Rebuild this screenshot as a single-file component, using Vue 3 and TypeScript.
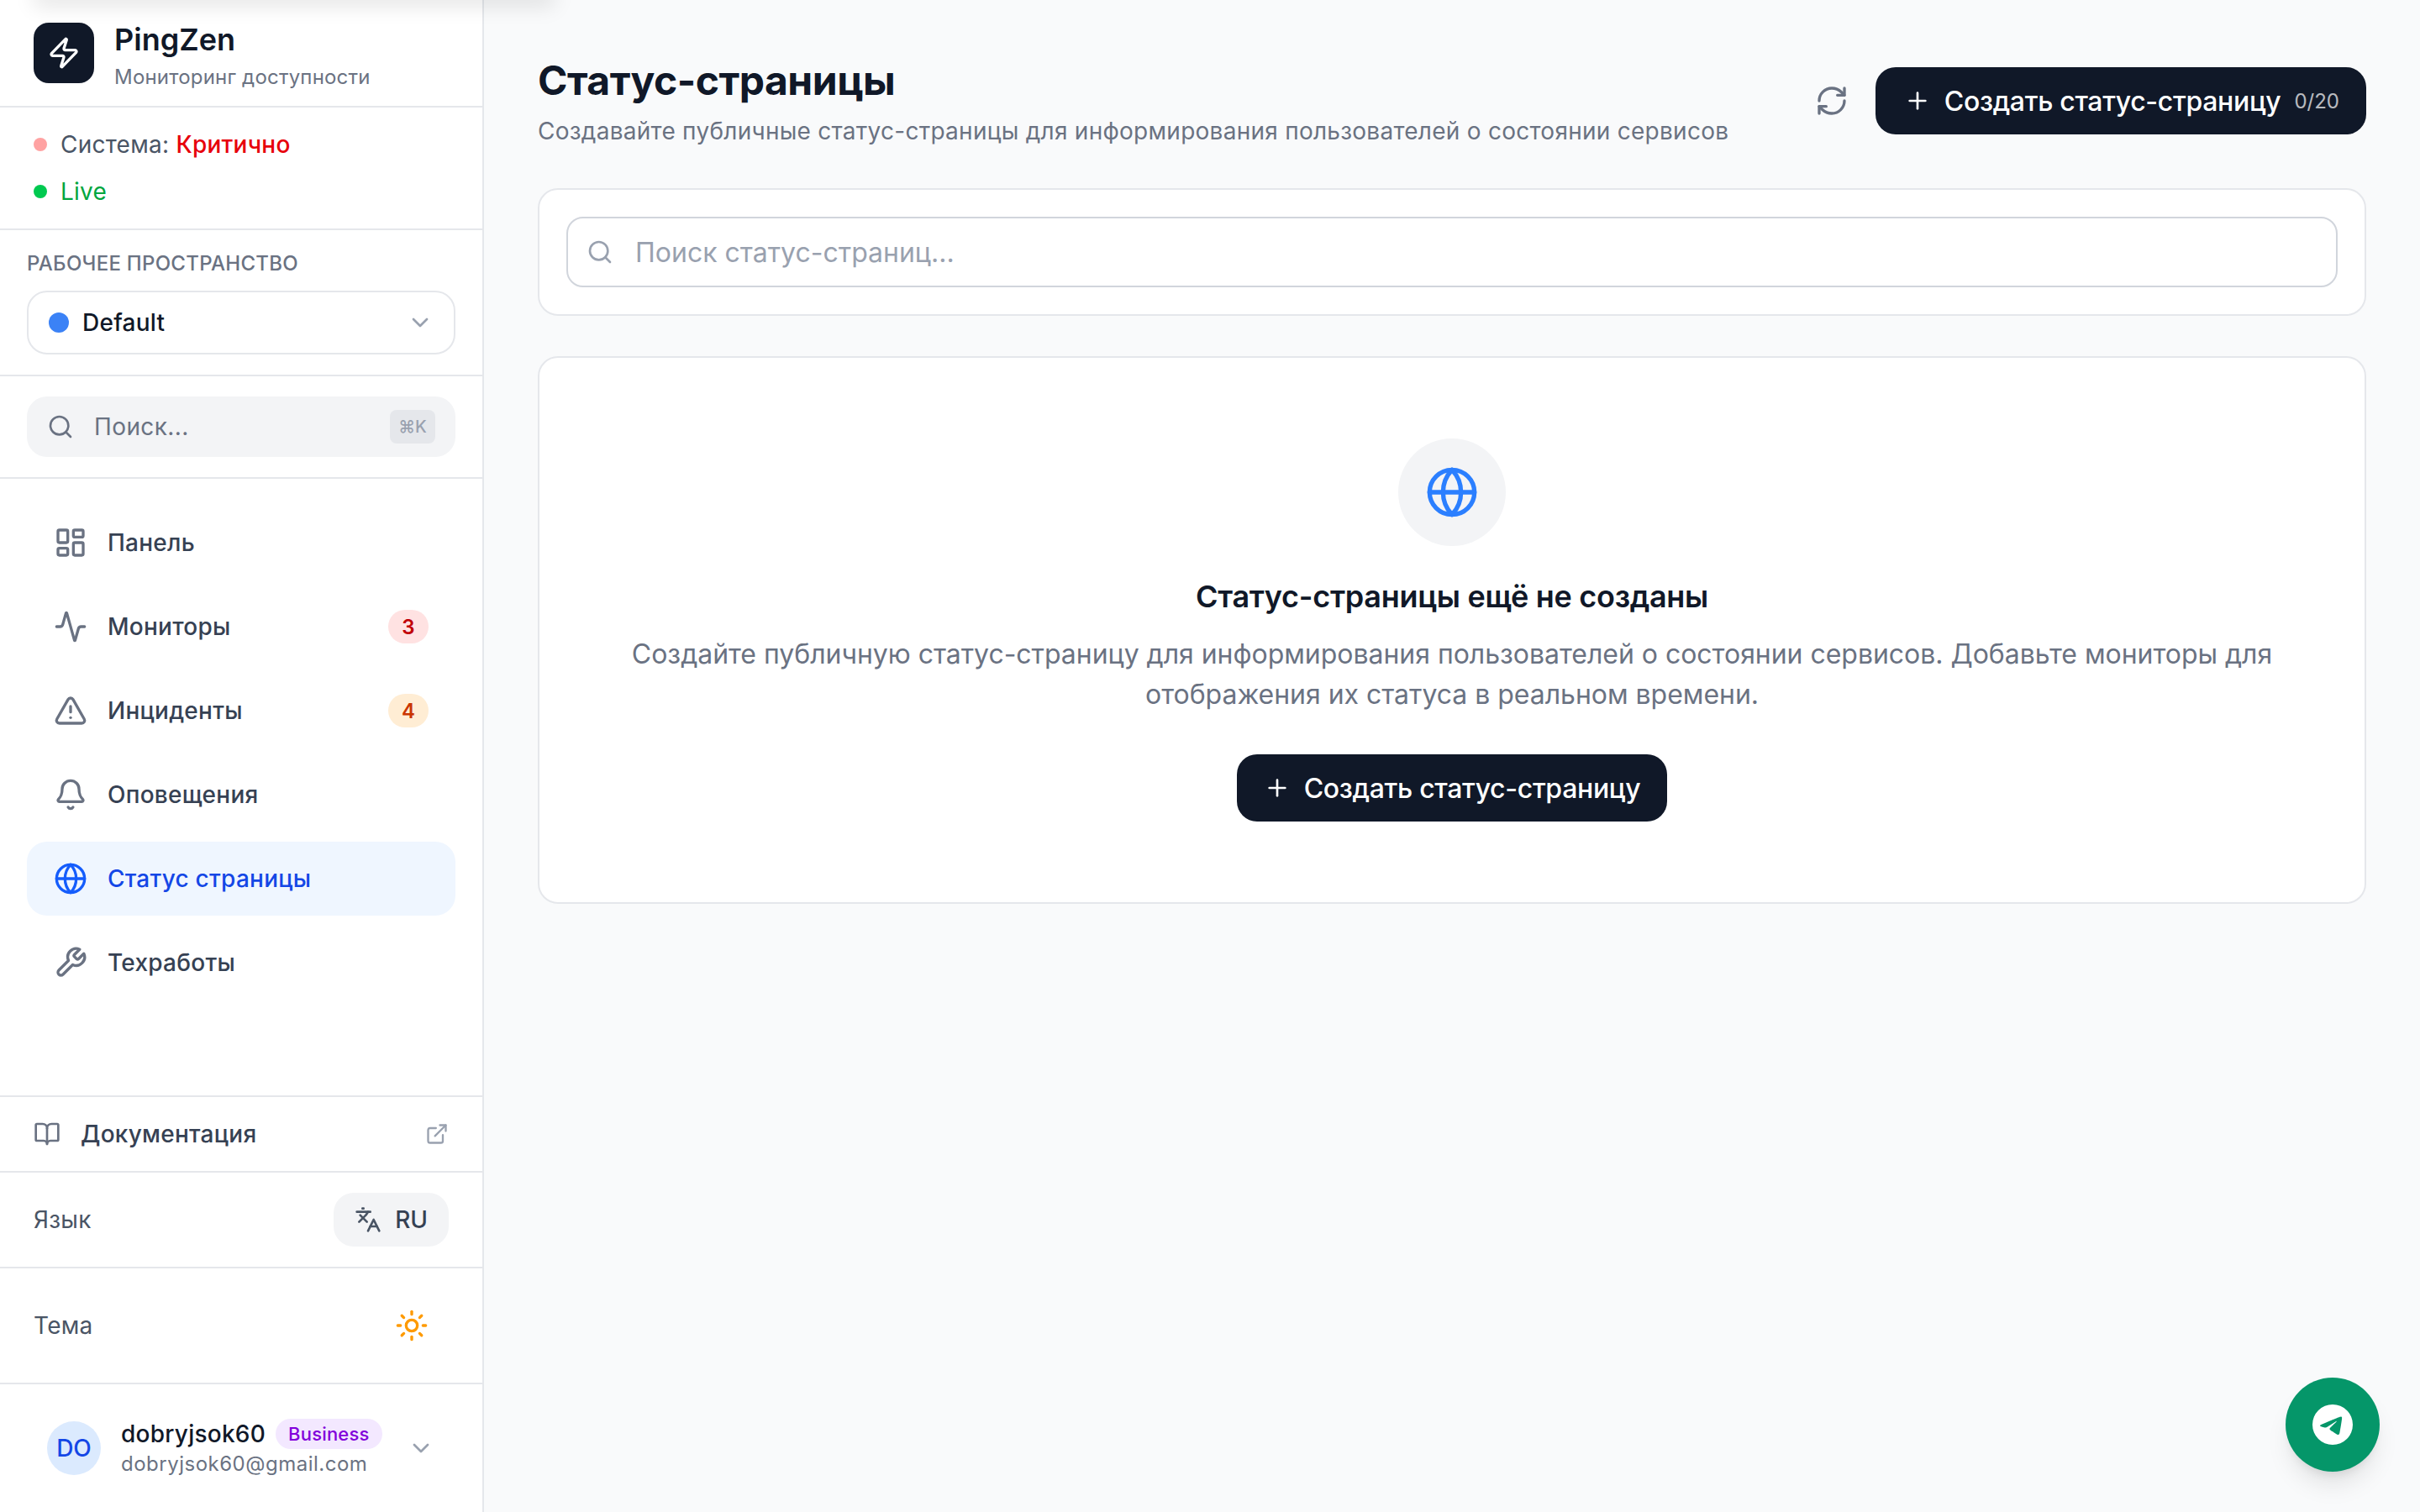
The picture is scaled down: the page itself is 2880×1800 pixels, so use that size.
<script setup lang="ts">
import { h } from 'vue'

const icons: Record<string, string[]> = {
  zap: ['M4 14a1 1 0 0 1-.78-1.63l9.9-10.2a.5.5 0 0 1 .86.46l-1.92 6.02A1 1 0 0 0 13 10h7a1 1 0 0 1 .78 1.63l-9.9 10.2a.5.5 0 0 1-.86-.46l1.92-6.02A1 1 0 0 0 11 14z'],
  chevron: ['m6 9 6 6 6-6'],
  search: ['M19 11a8 8 0 1 1-16 0 8 8 0 0 1 16 0z', 'm21 21-4.3-4.3'],
  dashboard: ['M4 3h5a1 1 0 0 1 1 1v7a1 1 0 0 1-1 1H4a1 1 0 0 1-1-1V4a1 1 0 0 1 1-1z', 'M15 3h5a1 1 0 0 1 1 1v3a1 1 0 0 1-1 1h-5a1 1 0 0 1-1-1V4a1 1 0 0 1 1-1z', 'M15 12h5a1 1 0 0 1 1 1v7a1 1 0 0 1-1 1h-5a1 1 0 0 1-1-1v-7a1 1 0 0 1 1-1z', 'M4 16h5a1 1 0 0 1 1 1v3a1 1 0 0 1-1 1H4a1 1 0 0 1-1-1v-3a1 1 0 0 1 1-1z'],
  activity: ['M22 12h-2.48a2 2 0 0 0-1.93 1.46l-2.35 8.36a.25.25 0 0 1-.48 0L9.24 2.18a.25.25 0 0 0-.48 0l-2.35 8.36A2 2 0 0 1 4.49 12H2'],
  alert: ['m21.73 18-8-14a2 2 0 0 0-3.48 0l-8 14A2 2 0 0 0 4 21h16a2 2 0 0 0 1.73-3', 'M12 9v4', 'M12 17h.01'],
  bell: ['M10.268 21a2 2 0 0 0 3.464 0', 'M3.262 15.326A1 1 0 0 0 4 17h16a1 1 0 0 0 .74-1.673C19.41 13.956 18 12.499 18 8A6 6 0 0 0 6 8c0 4.499-1.411 5.956-2.738 7.326'],
  globe: ['M22 12a10 10 0 1 1-20 0 10 10 0 0 1 20 0z', 'M12 2a14.5 14.5 0 0 0 0 20 14.5 14.5 0 0 0 0-20', 'M2 12h20'],
  wrench: ['M14.7 6.3a1 1 0 0 0 0 1.4l1.6 1.6a1 1 0 0 0 1.4 0l3.77-3.77a6 6 0 0 1-7.94 7.94l-6.91 6.91a2.12 2.12 0 0 1-3-3l6.91-6.91a6 6 0 0 1 7.94-7.94l-3.76 3.76z'],
  book: ['M12 7v14', 'M3 18a1 1 0 0 1-1-1V4a1 1 0 0 1 1-1h5a4 4 0 0 1 4 4 4 4 0 0 1 4-4h5a1 1 0 0 1 1 1v13a1 1 0 0 1-1 1h-6a3 3 0 0 0-3 3 3 3 0 0 0-3-3z'],
  external: ['M15 3h6v6', 'M10 14 21 3', 'M18 13v6a2 2 0 0 1-2 2H5a2 2 0 0 1-2-2V8a2 2 0 0 1 2-2h6'],
  languages: ['m5 8 6 6', 'm4 14 6-6 2-3', 'M2 5h12', 'M7 2h1', 'm22 22-5-10-5 10', 'M14 18h6'],
  sun: ['M16 12a4 4 0 1 1-8 0 4 4 0 0 1 8 0z', 'M12 2v2', 'M12 20v2', 'm4.93 4.93 1.41 1.41', 'm17.66 17.66 1.41 1.41', 'M2 12h2', 'M20 12h2', 'm6.34 17.66-1.41 1.41', 'm19.07 4.93-1.41 1.41'],
  refresh: ['M3 12a9 9 0 0 1 9-9 9.75 9.75 0 0 1 6.74 2.74L21 8', 'M21 3v5h-5', 'M21 12a9 9 0 0 1-9 9 9.75 9.75 0 0 1-6.74-2.74L3 16', 'M8 16H3v5'],
  plus: ['M5 12h14', 'M12 5v14'],
}

const Icon = (props: { name: string; size: number }) =>
  h(
    'svg',
    {
      width: props.size,
      height: props.size,
      viewBox: '0 0 24 24',
      fill: 'none',
      stroke: 'currentColor',
      'stroke-width': 2,
      'stroke-linecap': 'round',
      'stroke-linejoin': 'round',
      style: { flex: 'none', display: 'block' },
    },
    (icons[props.name] || []).map((d) => h('path', { d })),
  )
Icon.props = ['name', 'size']

interface NavItem {
  label: string
  icon: string
  badge?: string
  tone?: string
  active?: boolean
}

const nav: NavItem[] = [
  { label: 'Панель', icon: 'dashboard' },
  { label: 'Мониторы', icon: 'activity', badge: '3', tone: 'red' },
  { label: 'Инциденты', icon: 'alert', badge: '4', tone: 'orange' },
  { label: 'Оповещения', icon: 'bell' },
  { label: 'Статус страницы', icon: 'globe', active: true },
  { label: 'Техработы', icon: 'wrench' },
]
</script>

<template>
  <div class="app">
    <div class="top-glow"></div>
    <aside class="sidebar">
      <div class="brand">
        <div class="logo"><Icon name="zap" :size="40" /></div>
        <div class="brand-text">
          <div class="brand-name">PingZen</div>
          <div class="brand-sub">Мониторинг доступности</div>
        </div>
      </div>

      <div class="status">
        <div class="status-row">
          <span class="dot dot-red"></span>
          <span class="status-label">Система: <span class="critical">Критично</span></span>
        </div>
        <div class="status-row">
          <span class="dot dot-green"></span>
          <span class="live">Live</span>
        </div>
      </div>

      <div class="workspace">
        <div class="ws-label">РАБОЧЕЕ ПРОСТРАНСТВО</div>
        <div class="ws-select">
          <span class="ws-dot"></span>
          <span class="ws-name">Default</span>
          <Icon class="ws-chevron" name="chevron" :size="32" />
        </div>
      </div>

      <div class="side-search-wrap">
        <div class="side-search">
          <Icon class="side-search-icon" name="search" :size="32" />
          <span class="side-search-text">Поиск...</span>
          <span class="kbd">⌘K</span>
        </div>
      </div>

      <nav class="nav">
        <div v-for="item in nav" :key="item.label" class="nav-item" :class="{ active: item.active }">
          <Icon class="nav-icon" :name="item.icon" :size="40" />
          <span class="nav-label">{{ item.label }}</span>
          <span v-if="item.badge" class="nav-badge" :class="item.tone">{{ item.badge }}</span>
        </div>
      </nav>

      <div class="doc-row">
        <Icon class="doc-icon" name="book" :size="32" />
        <span class="doc-label">Документация</span>
        <Icon class="ext-icon" name="external" :size="28" />
      </div>

      <div class="lang-row">
        <span class="row-label">Язык</span>
        <div class="lang-pill">
          <Icon class="lang-icon" name="languages" :size="32" />
          <span>RU</span>
        </div>
      </div>

      <div class="theme-row">
        <span class="row-label">Тема</span>
        <Icon class="sun" name="sun" :size="40" />
      </div>

      <div class="user-row">
        <div class="avatar">DO</div>
        <div class="user-text">
          <div class="user-top">
            <span class="user-name">dobryjsok60</span>
            <span class="plan">Business</span>
          </div>
          <div class="user-email">dobryjsok60@gmail.com</div>
        </div>
        <Icon class="user-chevron" name="chevron" :size="32" />
      </div>
    </aside>

    <main class="main">
      <header class="page-head">
        <div>
          <h1 class="title">Статус-страницы</h1>
          <p class="subtitle">Создавайте публичные статус-страницы для информирования пользователей о состоянии сервисов</p>
        </div>
        <div class="head-actions">
          <Icon class="refresh" name="refresh" :size="40" />
          <button class="btn btn-head">
            <Icon name="plus" :size="32" />
            <span class="btn-label">Создать статус-страницу</span>
            <span class="count">0/20</span>
          </button>
        </div>
      </header>

      <section class="card search-card">
        <div class="search-field">
          <Icon class="field-icon" name="search" :size="32" />
          <span class="placeholder">Поиск статус-страниц...</span>
        </div>
      </section>

      <section class="card empty-card">
        <div class="empty-circle"><Icon name="globe" :size="64" /></div>
        <h2 class="empty-title">Статус-страницы ещё не созданы</h2>
        <p class="empty-text">Создайте публичную статус-страницу для информирования пользователей о состоянии сервисов. Добавьте мониторы для отображения их статуса в реальном времени.</p>
        <button class="btn btn-empty">
          <Icon name="plus" :size="32" />
          <span class="btn-label">Создать статус-страницу</span>
        </button>
      </section>
    </main>

    <div class="fab">
      <svg width="48" height="48" viewBox="0 0 16 16" fill="#fff">
        <path d="M16 8A8 8 0 1 1 0 8a8 8 0 0 1 16 0M8.287 5.906q-1.168.486-4.666 2.01-.567.225-.595.442c-.03.243.275.339.69.47l.175.055c.408.133.958.288 1.243.294q.39.01.868-.32 3.269-2.206 3.374-2.23c.05-.012.12-.026.166.016s.042.12.037.141c-.03.129-1.227 1.241-1.846 1.817-.193.18-.33.307-.358.336a8 8 0 0 1-.188.186c-.38.366-.664.64.015 1.088.327.216.589.393.85.571.284.194.568.387.936.629q.14.092.27.187c.331.236.63.448.997.414.214-.02.435-.22.547-.82.265-1.417.786-4.486.906-5.751a1.4 1.4 0 0 0-.013-.315.34.34 0 0 0-.114-.217.4.4 0 0 0-.232-.07c-.318.006-.805.178-3.14 1.15" />
      </svg>
    </div>
  </div>
</template>

<style>
html,
body {
  margin: 0;
  background: #f9fafb;
}
</style>

<style scoped>
.app {
  position: relative;
  display: flex;
  width: 2880px;
  height: 1800px;
  overflow: hidden;
  background: #f9fafb;
  font-family: Inter, 'Noto Sans', sans-serif;
  color: #101828;
}

.top-glow {
  position: absolute;
  z-index: 5;
  left: 40px;
  top: -24px;
  width: 620px;
  height: 24px;
  box-shadow: 0 8px 24px rgba(0, 0, 0, 0.1);
}

.sidebar {
  flex: none;
  box-sizing: border-box;
  width: 576px;
  height: 1800px;
  display: flex;
  flex-direction: column;
  background: #fff;
  border-right: 2px solid #e5e7eb;
}

.brand {
  box-sizing: border-box;
  height: 128px;
  flex: none;
  display: flex;
  align-items: center;
  gap: 24px;
  padding: 0 40px;
  border-bottom: 2px solid #e5e7eb;
}

.logo {
  width: 72px;
  height: 72px;
  border-radius: 18px;
  background: #101828;
  color: #fff;
  display: flex;
  align-items: center;
  justify-content: center;
}

.brand-text {
  padding-top: 5px;
}

.brand-name {
  font-size: 36px;
  line-height: 48px;
  font-weight: 600;
  color: #101828;
}

.brand-sub {
  margin-top: 5px;
  font-size: 24px;
  line-height: 32px;
  letter-spacing: 0.2px;
  color: #6a7282;
}

.status {
  flex: none;
  display: flex;
  flex-direction: column;
  gap: 16px;
  padding: 24px 40px 24px;
  border-bottom: 2px solid #e5e7eb;
}

.status-row {
  display: flex;
  align-items: center;
  gap: 16px;
  height: 40px;
  font-size: 28px;
  font-weight: 400;
  letter-spacing: 0.25px;
}

.dot {
  width: 16px;
  height: 16px;
  border-radius: 50%;
}

.dot-red {
  background: #ffa2a2;
}

.dot-green {
  background: #00c950;
}

.status-label {
  color: #4a5565;
}

.critical {
  color: #e7000b;
  font-weight: 500;
}

.live {
  color: #00a63e;
}

.workspace {
  flex: none;
  padding: 24px 32px;
  border-bottom: 2px solid #e5e7eb;
}

.ws-label {
  font-size: 24px;
  line-height: 32px;
  font-weight: 500;
  letter-spacing: 0.27px;
  color: #6a7282;
  margin-bottom: 16px;
}

.ws-select {
  box-sizing: border-box;
  height: 76px;
  display: flex;
  align-items: center;
  gap: 16px;
  padding: 0 24px;
  border: 2px solid #e5e7eb;
  border-radius: 24px;
}

.ws-dot {
  width: 24px;
  height: 24px;
  border-radius: 50%;
  background: #3b82f6;
}

.ws-name {
  font-size: 28px;
  font-weight: 500;
  letter-spacing: 0.25px;
  color: #101828;
}

.ws-chevron {
  margin-left: auto;
  color: #99a1af;
}

.side-search-wrap {
  flex: none;
  padding: 24px 32px;
  border-bottom: 2px solid #e5e7eb;
}

.side-search {
  height: 72px;
  display: flex;
  align-items: center;
  padding: 0 24px;
  border-radius: 24px;
  background: #f3f4f6;
}

.side-search-icon {
  color: #6a7282;
}

.side-search-text {
  margin-left: 24px;
  font-size: 28px;
  letter-spacing: 0.4px;
  color: #6a7282;
}

.kbd {
  margin-left: auto;
  width: 54px;
  height: 40px;
  display: flex;
  align-items: center;
  justify-content: center;
  border-radius: 8px;
  background: #e5e7eb;
  color: #99a1af;
  font-size: 20px;
  font-weight: 500;
}

.nav {
  flex: 1;
  min-height: 0;
  display: flex;
  flex-direction: column;
  gap: 12px;
  padding: 32px 32px 0;
  border-bottom: 2px solid #e5e7eb;
}

.nav-item {
  height: 88px;
  flex: none;
  display: flex;
  align-items: center;
  padding: 0 32px;
  border-radius: 24px;
  color: #364153;
}

.nav-icon {
  color: #6a7282;
}

.nav-label {
  margin-left: 24px;
  font-size: 28px;
  font-weight: 500;
  letter-spacing: 0.25px;
}

.nav-item.active {
  background: #eff6ff;
  color: #1447e6;
}

.nav-item.active .nav-icon {
  color: #155dfc;
}

.nav-badge {
  margin-left: auto;
  width: 48px;
  height: 40px;
  display: flex;
  align-items: center;
  justify-content: center;
  border-radius: 20px;
  font-size: 24px;
  font-weight: 600;
}

.nav-badge.red {
  background: #ffe2e2;
  color: #c10007;
}

.nav-badge.orange {
  background: #ffedd4;
  color: #ca3500;
}

.doc-row {
  box-sizing: border-box;
  flex: none;
  height: 90px;
  display: flex;
  align-items: center;
  padding: 0 40px;
  border-bottom: 2px solid #e5e7eb;
}

.doc-icon {
  color: #6a7282;
}

.doc-label {
  margin-left: 24px;
  font-size: 28px;
  font-weight: 500;
  letter-spacing: 0.25px;
  color: #364153;
}

.ext-icon {
  margin-left: auto;
  color: #99a1af;
}

.lang-row {
  box-sizing: border-box;
  flex: none;
  height: 114px;
  display: flex;
  align-items: center;
  justify-content: space-between;
  padding: 0 40px;
  border-bottom: 2px solid #e5e7eb;
}

.row-label {
  font-size: 28px;
  letter-spacing: 0.25px;
  color: #4a5565;
}

.lang-pill {
  display: flex;
  align-items: center;
  gap: 16px;
  height: 64px;
  padding: 0 25px;
  border-radius: 24px;
  background: #f3f4f6;
  font-size: 28px;
  font-weight: 500;
  color: #364153;
}

.lang-icon {
  color: #4a5565;
}

.theme-row {
  box-sizing: border-box;
  flex: none;
  height: 138px;
  display: flex;
  align-items: center;
  justify-content: space-between;
  padding: 0 64px 0 40px;
  border-bottom: 2px solid #e5e7eb;
}

.sun {
  color: #fe9a00;
}

.user-row {
  box-sizing: border-box;
  flex: none;
  height: 152px;
  display: flex;
  align-items: center;
  gap: 24px;
  padding: 0 57px 0 56px;
}

.avatar {
  flex: none;
  width: 64px;
  height: 64px;
  border-radius: 50%;
  background: #dbeafe;
  color: #1447e6;
  display: flex;
  align-items: center;
  justify-content: center;
  font-size: 28px;
  font-weight: 500;
}

.user-text {
  min-width: 0;
}

.user-top {
  display: flex;
  align-items: center;
  gap: 12px;
}

.user-name {
  font-size: 28px;
  line-height: 36px;
  font-weight: 500;
  letter-spacing: 0.25px;
  color: #101828;
}

.plan {
  padding: 0 15px;
  height: 36px;
  line-height: 36px;
  border-radius: 18px;
  background: #f3e8ff;
  color: #8200db;
  font-size: 22px;
  font-weight: 500;
  letter-spacing: 0.2px;
}

.user-email {
  margin-top: 2px;
  font-size: 24px;
  line-height: 32px;
  letter-spacing: 0.5px;
  color: #6a7282;
}

.user-chevron {
  margin-left: auto;
  color: #99a1af;
}

.main {
  flex: 1;
  min-width: 0;
  padding: 64px 64px 0;
}

.page-head {
  display: flex;
  align-items: center;
  justify-content: space-between;
  margin-bottom: 48px;
}

.title {
  margin: 0 0 8px;
  font-size: 48px;
  line-height: 64px;
  font-weight: 700;
  letter-spacing: -0.5px;
  color: #101828;
}

.subtitle {
  margin: 0;
  font-size: 28px;
  line-height: 40px;
  letter-spacing: 0.26px;
  color: #6a7282;
}

.head-actions {
  display: flex;
  align-items: center;
  gap: 32px;
}

.refresh {
  color: #6a7282;
}

.btn {
  display: inline-flex;
  align-items: center;
  gap: 16px;
  height: 80px;
  padding: 0 32px;
  border: 0;
  border-radius: 24px;
  background: #101828;
  color: #fff;
  font-family: inherit;
  font-size: 32px;
  font-weight: 500;
}

.btn-head {
  padding-left: 34px;
}

.btn-label {
  letter-spacing: -0.32px;
}

.count {
  font-size: 24px;
  font-weight: 400;
  opacity: 0.7;
}

.card {
  box-sizing: border-box;
  background: #fff;
  border: 2px solid #e5e7eb;
  border-radius: 24px;
}

.search-card {
  padding: 32px;
  margin-bottom: 48px;
}

.search-field {
  box-sizing: border-box;
  height: 84px;
  display: flex;
  align-items: center;
  padding: 0 22px;
  border: 2px solid #d1d5dc;
  border-radius: 20px;
}

.field-icon {
  color: #99a1af;
}

.placeholder {
  margin-left: 26px;
  font-size: 32px;
  color: #99a1af;
}

.empty-card {
  display: flex;
  flex-direction: column;
  align-items: center;
  padding: 96px 64px;
}

.empty-circle {
  width: 128px;
  height: 128px;
  border-radius: 50%;
  background: #f3f4f6;
  color: #2b7fff;
  display: flex;
  align-items: center;
  justify-content: center;
  margin-bottom: 32px;
}

.empty-title {
  margin: 0 0 17px;
  font-size: 36px;
  line-height: 56px;
  font-weight: 600;
  letter-spacing: -0.3px;
  color: #101828;
}

.empty-text {
  margin: 0 0 47px;
  font-size: 32px;
  line-height: 48px;
  letter-spacing: -0.03px;
  text-align: center;
  color: #6a7282;
}

.fab {
  position: absolute;
  left: 2720px;
  top: 1640px;
  width: 112px;
  height: 112px;
  border-radius: 50%;
  background: #059669;
  display: flex;
  align-items: center;
  justify-content: center;
  box-shadow: 0 20px 30px -6px rgba(0, 0, 0, 0.1), 0 8px 12px -6px rgba(0, 0, 0, 0.1);
}
</style>
